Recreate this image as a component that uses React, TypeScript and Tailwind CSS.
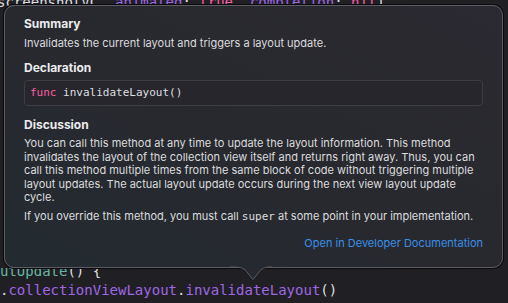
import React from "react";

const mono = { fontFamily: '"DejaVu Sans Mono", "Liberation Mono", monospace' };

export default function App() {
  return (
    <div
      className="relative w-[508px] h-[303px] overflow-hidden bg-[#1f1f24]"
      style={{ fontFamily: 'Inter, "Noto Sans", sans-serif' }}
    >
      {/* editor code behind */}
      <div className="flex flex-col h-full text-[14px] leading-[19px] whitespace-pre" style={mono}>
        <div className="-mt-[7px] -ml-[3px] text-[#dfdfe0]">
          screenshotVC, <span className="text-[#a167e6]">animated</span>: <span className="text-[#fc5fa3]">true</span>, <span className="text-[#a167e6]">completion</span>: <span className="text-[#fc5fa3]">nil</span>)
        </div>
        <div className="flex-1" />
        <div className="text-[#dfdfe0]">
          <span className="text-[#67b7a4]">utUpdate</span>() {"{"}
        </div>
        <div className="mb-[3px] text-[#dfdfe0]">
          .<span className="text-[#a167e6]">collectionViewLayout</span>.<span className="text-[#a167e6]">invalidateLayout</span>()
        </div>
      </div>

      {/* popover */}
      <div className="absolute left-[4px] top-[5px] w-[499px] h-[263px]">
        <div className="absolute inset-0 rounded-[10px] border border-[#5c5c62] bg-gradient-to-tr from-[#232b31] via-[#28292f] to-[#2b2931] shadow-[0_0_0_1px_#0b0b0d]" />
        <svg
          className="absolute left-[226px] top-[261px]"
          width="42"
          height="16"
          viewBox="0 0 42 16"
        >
          <path
            d="M0 1 C9 1 13 1 17 6 L23 13.5 L29 6 C33 1 37 1 42 1 L42 0 L0 0 Z"
            fill="#262a30"
          />
          <path
            d="M0 1 C9 1 13 1 17 6 L23 13.5 L29 6 C33 1 37 1 42 1"
            fill="none"
            stroke="#5c5c62"
            strokeWidth="1"
          />
        </svg>
        <div className="relative flex flex-col pl-[20px] pr-[20px] pt-[12px] text-[11px] text-[#dcdcde]">
          <div className="text-[12px] font-bold leading-[14px] text-[#ececee]">Summary</div>
          <div className="mt-[5px] leading-[14px]">Invalidates the current layout and triggers a layout update.</div>
          <div className="mt-[11px] text-[12px] font-bold leading-[14px] text-[#ececee]">Declaration</div>
          <div
            className="mt-[5px] flex h-[26px] items-center rounded-[4px] border border-[#3d3d44] bg-[#26262c] px-[5px] text-[11px] text-[#dfdfe0]"
            style={mono}
          >
            <span className="text-[#fc5fa3]">func</span>&nbsp;invalidateLayout()
          </div>
          <div className="mt-[12px] text-[12px] font-bold leading-[14px] text-[#ececee]">Discussion</div>
          <div className="mt-[5px] leading-[13.5px]">
            You can call this method at any time to update the layout information. This method invalidates the layout of
            the collection view itself and returns right away. Thus, you can call this method multiple times from the same
            block of code without triggering multiple layout updates. The actual layout update occurs during the next view
            layout update cycle.
          </div>
          <div className="mt-[5px] leading-[13.5px]">
            If you override this method, you must call{" "}
            <span className="text-[11px]" style={mono}>super</span> at some point in your implementation.
          </div>
          <div className="mt-[13px] text-right leading-[14px] text-[#3a8fe8]">Open in Developer Documentation</div>
        </div>
      </div>
    </div>
  );
}
